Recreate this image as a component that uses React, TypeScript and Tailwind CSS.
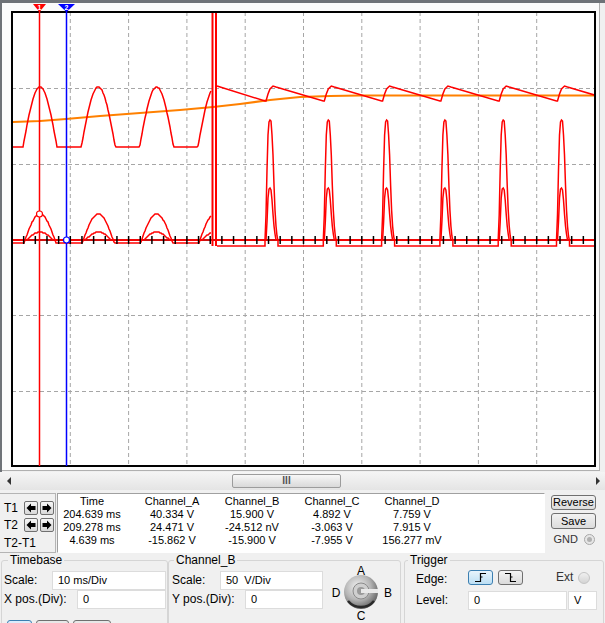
import React from "react";

const P = 58.3;
const X0 = 12;
const X1 = 595;
const Y0 = 12;
const Y1 = 466;
const YC = 240;

type Pt = [number, number];
const pts = (list: Pt[]) => list.map(([x, y]) => `${x.toFixed(1)},${y.toFixed(1)}`).join(" ");

function humps(centers: number[], w: number, peak: number, base: number, from: number, to: number): Pt[] {
  const out: Pt[] = [];
  for (let x = from; x <= to; x += 1) {
    let y = base;
    for (const c of centers) {
      const d = Math.abs(x - c);
      if (d < w) y = Math.min(y, base - (base - peak) * Math.cos(((d / w) * Math.PI) / 2));
    }
    out.push([x, Math.round(y)]);
  }
  return out;
}

const centers = [40 - P, 40, 40 + P, 40 + 2 * P, 40 + 3 * P];
const pulses = [0, 1, 2, 3, 4, 5].map((k) => 270 + k * P);

// channel A: rectified humps, then sawtooth after the spike
const traceA1 = humps(centers, 17, 87, 147, X0, 211);
const traceA2: Pt[] = [[217, 86]];
for (let k = 0; k < 7; k++) {
  const b = 265 + k * P;
  traceA2.push([b, 101], [b + 1, 101], [b + 3, 94], [b + 5, 89], [b + 8, 86], [b + 11, 87]);
}

// channel B: humps, then tall narrow pulses
const tall: Pt[] = [
  [-5, 246], [-5, 240], [-4, 215], [-3, 170], [-2, 135], [-1, 122], [0, 120], [1, 121],
  [2, 135], [3, 155], [4, 185], [5, 210], [6, 226], [7, 236], [8, 241], [8, 246],
];
const traceB1 = humps(centers, 16, 214, 243, X0, 211);
const traceB2: Pt[] = [[217, 246]];
pulses.forEach((c) => tall.forEach(([dx, y]) => traceB2.push([c + dx, y])));
traceB2.push([X1, 246]);

// channel C: small humps, then small pulses
const small: Pt[] = [
  [-4, 240], [-3, 222], [-2, 198], [-1, 189], [0, 188], [1, 190], [2, 200], [3, 214],
  [4, 226], [5, 234], [6, 240],
];
const traceC1 = humps(centers, 13, 232, 240, X0, 211);
const traceC2: Pt[] = [[217, 240]];
pulses.forEach((c) => small.forEach(([dx, y]) => traceC2.push([c + dx, y])));
traceC2.push([X1, 240]);

const orange: Pt[] = [
  [12, 122], [40, 121], [66, 119], [100, 116], [140, 113], [180, 110], [213, 107],
  [240, 104], [270, 100], [300, 97], [330, 96], [360, 95.5], [X1, 95.5],
];

function Screen() {
  const vGrid = Array.from({ length: 9 }, (_, i) => X0 + (i + 1) * P);
  const hGrid = [88, 164, 315, 391];
  const ticks = Array.from({ length: 49 }, (_, i) => X0 + ((i + 1) * P) / 5);
  return (
    <div className="h-[472px] border-l-2 border-t-[3px] border-[#6e7277]">
      <svg width="603" height="469" viewBox="2 3 603 469" className="block">
        <defs>
          <clipPath id="plot">
            <rect x={X0 + 1} y={Y0 + 1} width={X1 - X0 - 2} height={Y1 - Y0 - 2} />
          </clipPath>
        </defs>
        <rect x="2" y="3" width="597" height="468" fill="#fbfbfb" />
        <line x1="599.5" y1="3" x2="599.5" y2="471" stroke="#b0b0b0" />
        <line x1="2" y1="470.5" x2="600" y2="470.5" stroke="#b0b0b0" />
        <rect x={X0} y={Y0} width={X1 - X0} height={Y1 - Y0} fill="#fff" />
        {vGrid.map((x) => (
          <line key={x} x1={x} y1={Y0} x2={x} y2={Y1} stroke="#a6a6a6" strokeDasharray="4 3" />
        ))}
        {hGrid.map((y) => (
          <line key={y} x1={X0} y1={y + 0.5} x2={X1} y2={y + 0.5} stroke="#a6a6a6" strokeDasharray="4 3" />
        ))}
        <line x1={X0} y1={YC} x2={X1} y2={YC} stroke="#000" strokeWidth="1.5" />
        <g clipPath="url(#plot)" fill="none" strokeLinejoin="miter">
          <polyline points={pts(orange)} stroke="#ff8000" strokeWidth="2" />
          <line x1={X0} y1={YC} x2={X1} y2={YC} stroke="#ff0000" strokeWidth="1.5" />
          <polyline points={pts(traceC1)} stroke="#ff0000" strokeWidth="1.5" />
          <polyline points={pts(traceC2)} stroke="#ff0000" strokeWidth="1.5" />
          <polyline points={pts(traceB1)} stroke="#ff0000" strokeWidth="1.5" />
          <polyline points={pts(traceB2)} stroke="#ff0000" strokeWidth="1.5" />
          <polyline points={pts(traceA1)} stroke="#ff0000" strokeWidth="1.5" />
          <polyline points={pts(traceA2)} stroke="#ff0000" strokeWidth="1.5" />
          <line x1="212.5" y1={Y0} x2="212.5" y2="246" stroke="#ff0000" strokeWidth="2" />
          <line x1="216" y1={Y0} x2="216" y2="246" stroke="#ff0000" strokeWidth="2" />
        </g>
        {ticks.map((x) => (
          <line key={x} x1={x} y1={YC - 4} x2={x} y2={YC + 4} stroke="#000" strokeWidth="1.5" />
        ))}
        <rect x={X0} y={Y0} width={X1 - X0} height={Y1 - Y0} fill="none" stroke="#000" strokeWidth="2" />
        {/* cursors */}
        <line x1="39.5" y1="5" x2="39.5" y2={Y1} stroke="#ff0000" strokeWidth="1.5" />
        <line x1="66.5" y1="5" x2="66.5" y2={Y1} stroke="#0000ff" strokeWidth="1.5" />
        <polygon points="33,4 46,4 39.5,12" fill="#ff0000" />
        <polygon points="58,4 75,4 66.5,12" fill="#0000ff" />
        <text x="39.5" y="10" fontSize="7" fontWeight="bold" fill="#fff" textAnchor="middle" fontFamily="Liberation Sans">1</text>
        <text x="66.5" y="10" fontSize="7" fontWeight="bold" fill="#fff" textAnchor="middle" fontFamily="Liberation Sans">2</text>
        <circle cx="39.5" cy="214" r="3" fill="#fff" stroke="#ff0000" strokeWidth="1.2" />
        <circle cx="66.5" cy="240" r="3" fill="#fff" stroke="#0000ff" strokeWidth="1.2" />
      </svg>
    </div>
  );
}

function ScrollBar() {
  return (
    <div className="h-[18px] flex items-center bg-gradient-to-b from-[#f5f5f5] to-[#e4e4e4]">
      <div className="ml-[7px] w-0 h-0 border-y-[4px] border-y-transparent border-r-[4px] border-r-[#333]" />
      <div className="ml-[221px] w-[109px] h-[14px] rounded-[2px] border border-[#9c9c9c] bg-gradient-to-b from-[#f7f7f7] to-[#d9d9d9] flex items-center justify-center text-[10px] font-bold leading-none tracking-[0px] text-[#555]">
        III
      </div>
      <div className="ml-[255px] w-0 h-0 border-y-[4px] border-y-transparent border-l-[4px] border-l-[#333]" />
    </div>
  );
}

function ArrowBtn({ dir }: { dir: "l" | "r" }) {
  return (
    <div className="w-[14px] h-[14px] rounded-[2px] border border-[#707070] bg-gradient-to-b from-[#f6f6f6] to-[#d8d8d8] flex items-center justify-center">
      <svg width="10" height="10" viewBox="0 0 10 10">
        {dir === "l" ? (
          <path d="M0.5 5 L5 0.5 V3 H9.5 V7 H5 V9.5 Z" fill="#000" />
        ) : (
          <path d="M9.5 5 L5 0.5 V3 H0.5 V7 H5 V9.5 Z" fill="#000" />
        )}
      </svg>
    </div>
  );
}

const rows = [
  ["Time", "Channel_A", "Channel_B", "Channel_C", "Channel_D"],
  ["204.639 ms", "40.334 V", "15.900 V", "4.892 V", "7.759 V"],
  ["209.278 ms", "24.471 V", "-24.512 nV", "-3.063 V", "7.915 V"],
  ["4.639 ms", "-15.862 V", "-15.900 V", "-7.955 V", "156.277 mV"],
];

function Readout() {
  return (
    <div className="h-[63px] flex pt-[3px]">
      <div className="w-[56px] h-[60px] border-t border-r border-b border-[#b4b4b4] flex flex-col">
        <div className="flex items-center h-[16px] mt-[6px]">
          <span className="w-[24px] pl-[4px] text-[12px]">T1</span>
          <div className="flex gap-[2px]">
            <ArrowBtn dir="l" />
            <ArrowBtn dir="r" />
          </div>
        </div>
        <div className="flex items-center h-[16px] mt-[1px]">
          <span className="w-[24px] pl-[4px] text-[12px]">T2</span>
          <div className="flex gap-[2px]">
            <ArrowBtn dir="l" />
            <ArrowBtn dir="r" />
          </div>
        </div>
        <div className="pl-[4px] mt-[4px] text-[12px]">T2-T1</div>
      </div>
      <div className="ml-[1px] w-[488px] h-[60px] border border-[#a0a0a0] border-r-white border-b-white bg-white pt-[1px]">
        <div className="-ml-[6px] grid grid-cols-[80px_80px_80px_80px_80px]">
          {rows.map((r, i) =>
            r.map((c, j) => (
              <div key={`${i}-${j}`} className="text-center leading-[13px] whitespace-nowrap">
                {c}
              </div>
            ))
          )}
        </div>
      </div>
      <div className="flex-1 flex flex-col items-end pr-[9px] pt-[1px]">
        <button className="mt-[1px] w-[45px] h-[15px] rounded-[3px] border border-[#707070] bg-gradient-to-b from-[#f2f2f2] to-[#dcdcdc] text-[11px] leading-[13px]">
          Reverse
        </button>
        <button className="mt-[3px] w-[45px] h-[16px] rounded-[3px] border border-[#707070] bg-gradient-to-b from-[#f2f2f2] to-[#dcdcdc] text-[11px] leading-[13px]">
          Save
        </button>
        <div className="mt-[4px] flex items-center gap-[6px] pr-[1px]">
          <span className="text-[#333]">GND</span>
          <span className="w-[11px] h-[11px] rounded-full border border-[#a8a8a8] bg-[#e6e6e6] flex items-center justify-center">
            <span className="w-[5px] h-[5px] rounded-full bg-[#b0b0b0]" />
          </span>
        </div>
      </div>
    </div>
  );
}

function Field({ w, text }: { w: string; text: string }) {
  return (
    <div className={`${w} h-[19px] border border-[#dcdcdc] bg-white pl-[5px] flex items-center text-[11px] whitespace-pre`}>
      {text}
    </div>
  );
}

function Knob() {
  return (
    <svg width="66" height="60" viewBox="0 0 66 60" className="block">
      <defs>
        <radialGradient id="kg" cx="40%" cy="35%" r="70%">
          <stop offset="0" stopColor="#f2f2f2" />
          <stop offset="0.55" stopColor="#b4b4b4" />
          <stop offset="1" stopColor="#5a5a5a" />
        </radialGradient>
      </defs>
      <circle cx="31" cy="30" r="17" fill="url(#kg)" />
      <path d="M18 39 A17 17 0 0 0 44 39" stroke="#2a2a2a" strokeWidth="2.5" fill="none" />
      <circle cx="31" cy="29" r="8" fill="#cfcfcf" stroke="#8a8a8a" />
      <circle cx="31" cy="29" r="4" fill="#9a9a9a" />
      <rect x="31" y="27" width="17" height="4" fill="#e8e8e8" />
      <text x="31" y="13" fontSize="12" textAnchor="middle" fontFamily="Liberation Sans">A</text>
      <text x="6" y="35" fontSize="12" textAnchor="middle" fontFamily="Liberation Sans">D</text>
      <text x="58" y="35" fontSize="12" textAnchor="middle" fontFamily="Liberation Sans">B</text>
      <text x="31" y="58" fontSize="12" textAnchor="middle" fontFamily="Liberation Sans">C</text>
    </svg>
  );
}

function Controls() {
  return (
    <div className="flex h-[70px] pt-[1px]">
      <fieldset className="ml-[1px] w-[167px] h-[90px] border border-[#d5d5d5] rounded-[3px]">
        <legend className="ml-[6px] px-[2px] text-[12px] leading-[13px]">Timebase</legend>
        <div className="flex items-center mt-[4px]">
          <span className="w-[50px] pl-[2px] text-[12px]">Scale:</span>
          <Field w="w-[114px]" text="10 ms/Div" />
        </div>
        <div className="flex items-center mt-[0px]">
          <span className="w-[75px] pl-[2px] text-[12px]">X pos.(Div):</span>
          <Field w="w-[89px]" text="0" />
        </div>
        <div className="flex gap-[4px] ml-[5px] mt-[11px]">
          <div className="w-[25px] h-[20px] rounded-[3px] border border-[#3c7fb1] bg-[#dcecfc]" />
          <div className="w-[33px] h-[20px] rounded-[3px] border border-[#707070] bg-[#e8e8e8]" />
          <div className="w-[38px] h-[20px] rounded-[3px] border border-[#707070] bg-[#e8e8e8]" />
        </div>
      </fieldset>
      <fieldset className="w-[233px] h-[90px] border border-[#d5d5d5] rounded-[3px]">
        <legend className="ml-[5px] px-[2px] text-[12px] leading-[13px]">Channel_B</legend>
        <div className="flex">
          <div className="flex flex-col">
            <div className="flex items-center mt-[4px]">
              <span className="w-[51px] pl-[3px] text-[12px]">Scale:</span>
              <Field w="w-[103px]" text="50  V/Div" />
            </div>
            <div className="flex items-center">
              <span className="w-[76px] pl-[3px] text-[12px]">Y pos.(Div):</span>
              <Field w="w-[78px]" text="0" />
            </div>
          </div>
          <div className="ml-[7px] -mt-[5px]">
            <Knob />
          </div>
        </div>
      </fieldset>
      <fieldset className="ml-[3px] w-[200px] h-[90px] border border-[#d5d5d5] rounded-[3px]">
        <legend className="ml-[3px] px-[2px] text-[12px] leading-[13px]">Trigger</legend>
        <div className="flex items-center mt-[2px]">
          <span className="w-[63px] pl-[11px] text-[12px] mt-[4px]">Edge:</span>
          <div className="w-[25px] h-[15px] rounded-[3px] border border-[#3c7fb1] bg-gradient-to-b from-[#e8f4fc] to-[#bcdff4] flex items-center justify-center">
            <svg width="14" height="11" viewBox="0 0 14 11">
              <path d="M1 9.5 H6.5 V1.5 H12 M6.5 5 H8.5" stroke="#000" strokeWidth="1.2" fill="none" />
            </svg>
          </div>
          <div className="ml-[5px] w-[25px] h-[15px] rounded-[3px] border border-[#707070] bg-gradient-to-b from-[#f4f4f4] to-[#dadada] flex items-center justify-center">
            <svg width="14" height="11" viewBox="0 0 14 11">
              <path d="M1 1.5 H6.5 V9.5 H12 M6.5 5 H8.5" stroke="#000" strokeWidth="1.2" fill="none" />
            </svg>
          </div>
          <span className="ml-[33px] text-[12px] text-[#333]">Ext</span>
          <span className="ml-[5px] w-[12px] h-[12px] rounded-full border border-[#c4c4c4] bg-gradient-to-b from-[#f0f0f0] to-[#d4d4d4]" />
        </div>
        <div className="flex items-center mt-[5px]">
          <span className="w-[63px] pl-[11px] text-[12px]">Level:</span>
          <Field w="w-[99px]" text="0" />
          <div className="ml-[1px] w-[29px] h-[19px] border border-[#dcdcdc] bg-white pl-[5px] flex items-center">V</div>
        </div>
      </fieldset>
    </div>
  );
}

export default function App() {
  return (
    <div className="w-[605px] h-[623px] overflow-hidden bg-[#f0f0f0] text-[11px] leading-[13px] text-black font-['Liberation_Sans',Arial,sans-serif]">
      <Screen />
      <ScrollBar />
      <Readout />
      <Controls />
    </div>
  );
}
